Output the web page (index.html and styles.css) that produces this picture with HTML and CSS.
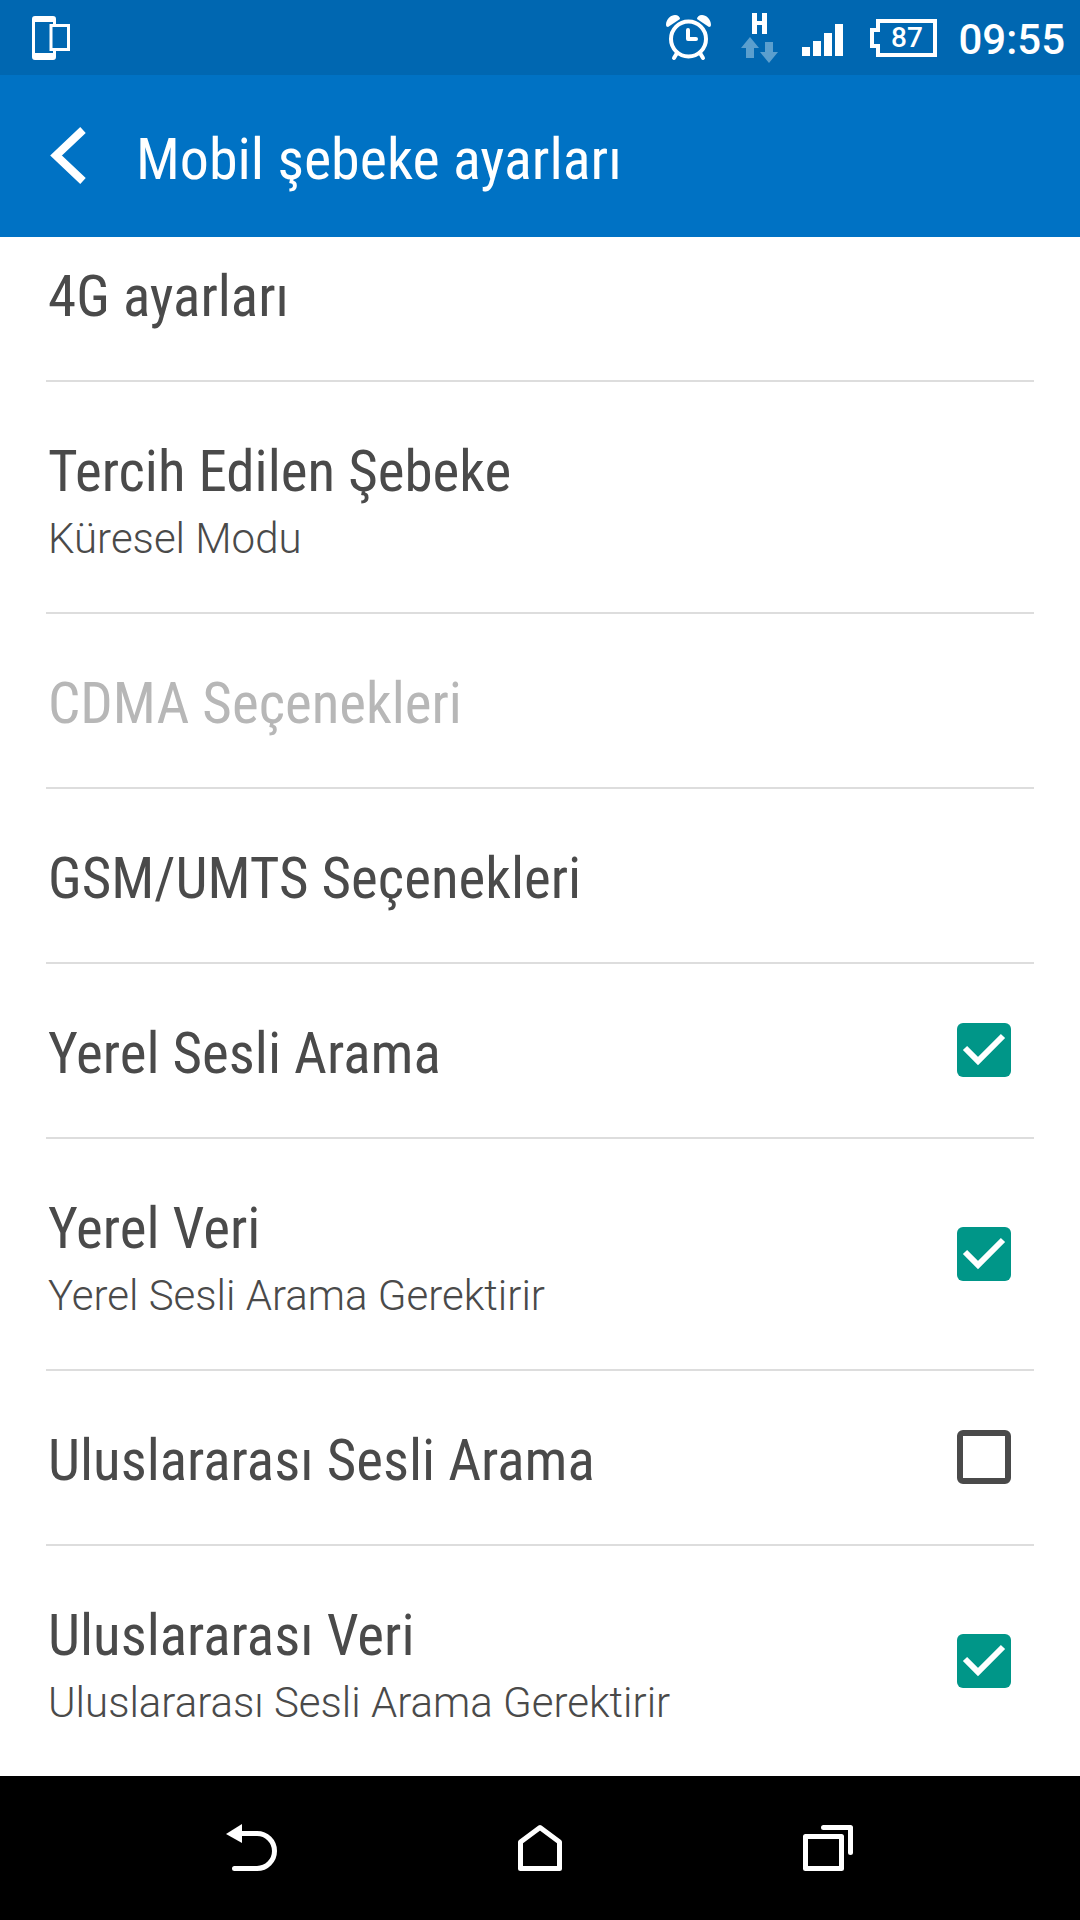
FILE: index.html
```html
<!DOCTYPE html>
<html lang="tr">
<head>
<meta charset="utf-8">
<meta name="viewport" content="width=device-width, initial-scale=1">
<title>Mobil şebeke ayarları</title>
<link rel="stylesheet" href="styles.css">
</head>
<body>
<div class="screen">
  <div class="status">
    <svg class="status-device" width="40" height="44" viewBox="0 0 40 44" aria-hidden="true">
      <path fill="#fff" fill-rule="evenodd" d="M3 0H21Q24 0 24 3V8H21V6H3V37H21V35H24V41Q24 44 21 44H3Q0 44 0 41V3Q0 0 3 0Z"/>
      <path fill="none" stroke="#fff" stroke-width="3" d="M19 9.5H36.500V33.500H19Z"/>
    </svg>
    <div class="status-icons">
      <svg class="status-alarm" width="46" height="46" viewBox="0 0 46 46" aria-hidden="true">
        <path fill="#fff" d="M0 10C0 4 5 0 9 0C12 0 14 2 14 4L2 12Q0 12 0 10ZM45 10C45 4 40 0 36 0C33 0 31 2 31 4L43 12Q45 12 45 10Z"/>
        <circle cx="22.500" cy="24" r="17.500" fill="none" stroke="#fff" stroke-width="4"/>
        <path fill="none" stroke="#fff" stroke-width="4" stroke-linecap="round" stroke-linejoin="round" d="M22 15V24H30M11 38L8 43M34 38L37 43"/>
      </svg>
      <svg class="status-data" width="38" height="50" viewBox="0 0 38 50" aria-hidden="true">
        <path fill="#fff" d="M11 0H16V8H21V0H26V21H21V12H16V21H11Z"/>
        <path fill="#5b9fce" d="M9 24L18 35H13V45H5V35H0ZM24 29H32V39H37L28 50L19 39H24Z"/>
      </svg>
      <svg class="status-signal" width="41" height="32" viewBox="0 0 41 32" aria-hidden="true">
        <path fill="#fff" d="M0 23H8V32H0ZM11 17H19V32H11ZM22 9H30V32H22ZM33 0H41V32H33Z"/>
      </svg>
      <span class="battery">
        <svg width="67" height="38" viewBox="0 0 67 38" aria-hidden="true">
          <path fill="none" stroke="#fff" stroke-width="4" d="M8 2H65V36H8V27H2V11H8Z"/>
        </svg>
        <span class="battery-level">87</span>
      </span>
      <time class="clock">09:55</time>
    </div>
  </div>

  <header class="header">
    <button class="up" type="button" aria-label="Geri">
      <svg width="36" height="57" viewBox="0 0 36 57" aria-hidden="true">
        <path fill="none" stroke="#fff" stroke-width="8" d="M33 3L6 28.500L33 54"/>
      </svg>
    </button>
    <h1 class="heading">Mobil şebeke ayarları</h1>
  </header>

  <main class="settings">
    <button class="row row-first" type="button"><span class="title">4G ayarları</span></button>
    <button class="row" type="button">
      <span class="text"><span class="title">Tercih Edilen Şebeke</span><span class="summary">Küresel Modu</span></span>
    </button>
    <button class="row" type="button" disabled><span class="title">CDMA Seçenekleri</span></button>
    <button class="row" type="button"><span class="title">GSM/UMTS Seçenekleri</span></button>
    <label class="row">
      <span class="title">Yerel Sesli Arama</span>
      <input class="check" type="checkbox" checked>
    </label>
    <label class="row">
      <span class="text"><span class="title">Yerel Veri</span><span class="summary">Yerel Sesli Arama Gerektirir</span></span>
      <input class="check" type="checkbox" checked>
    </label>
    <label class="row">
      <span class="title">Uluslararası Sesli Arama</span>
      <input class="check" type="checkbox">
    </label>
    <label class="row">
      <span class="text"><span class="title">Uluslararası Veri</span><span class="summary">Uluslararası Sesli Arama Gerektirir</span></span>
      <input class="check" type="checkbox" checked>
    </label>
  </main>

  <nav class="navbar">
    <button class="nav-button" type="button" aria-label="Geri">
      <svg width="52" height="48" viewBox="0 0 52 48" aria-hidden="true">
        <path fill="#fff" d="M0 10L16 0V19Z"/>
        <path fill="none" stroke="#fff" stroke-width="5" stroke-linecap="round" d="M14 9.500H31A17.500 17.500 0 0 1 31 44.500H8.500"/>
      </svg>
    </button>
    <button class="nav-button" type="button" aria-label="Ana ekran">
      <svg width="44" height="48" viewBox="0 0 44 48" aria-hidden="true">
        <path fill="none" stroke="#fff" stroke-width="5" stroke-linejoin="round" d="M2.500 18L22 3.500L41.500 18V44.500H2.500Z"/>
      </svg>
    </button>
    <button class="nav-button" type="button" aria-label="Son uygulamalar">
      <svg width="50" height="48" viewBox="0 0 50 48" aria-hidden="true">
        <path fill="none" stroke="#fff" stroke-width="5" stroke-linecap="round" stroke-linejoin="round" d="M2.500 12.500H38.500V44.500H2.500ZM20.500 3.500H47.500V28.500"/>
      </svg>
    </button>
  </nav>
</div>
</body>
</html>
```
FILE: styles.css
```css
* {
  box-sizing: border-box;
}

body {
  margin: 0;
  font-family: Roboto, "Noto Sans", sans-serif;
  color: #4a4a4a;
  background: #fff;
}

button {
  margin: 0;
  padding: 0;
  border: 0;
  background: none;
  font: inherit;
  color: inherit;
  text-align: left;
}

svg {
  display: block;
  flex: none;
}

.screen {
  display: flex;
  flex-direction: column;
  min-height: 100vh;
}

.status {
  display: flex;
  justify-content: space-between;
  height: 75px;
  padding: 0 15px 0 32px;
  background: #0067b1;
  color: #fff;
}

.status-device {
  margin-top: 16px;
}

.status-icons {
  display: flex;
  align-items: flex-start;
}

.status-alarm {
  margin-top: 15px;
}

.status-data {
  margin: 13px 0 0 29px;
}

.status-signal {
  margin: 24px 0 0 23px;
}

.battery {
  position: relative;
  margin: 19px 0 0 27px;
}

.battery-level {
  position: absolute;
  inset: 0 0 0 6px;
  font-size: 28px;
  font-weight: 500;
  line-height: 38px;
  text-align: center;
}

.clock {
  margin: 15px 0 0 21px;
  font-size: 42px;
  font-weight: 500;
  line-height: 49px;
}

.header {
  display: flex;
  align-items: center;
  height: 162px;
  padding: 5px 0 0 50px;
  background: #0072c4;
  color: #fff;
}

.up {
  margin-bottom: 6px;
}

.heading {
  margin: 0 0 0 50px;
  font: 400 58px/68px "Roboto Condensed", Roboto, sans-serif;
}

.settings {
  flex: 1;
  display: flex;
  flex-direction: column;
  padding: 0 46px;
}

.row {
  display: flex;
  align-items: center;
  justify-content: space-between;
  padding: 56px 23px 49px 2px;
  border-bottom: 2px solid #ddd;
}

.row-first {
  padding-top: 26px;
}

.row:last-child {
  border-bottom: 0;
}

.row:disabled {
  color: #b7b7b7;
}

.text {
  display: flex;
  flex-direction: column;
  gap: 8px;
}

.title {
  font: 400 57px/68px "Roboto Condensed", Roboto, sans-serif;
}

.summary {
  font-size: 42px;
  font-weight: 300;
  line-height: 49px;
}

.check {
  appearance: none;
  flex: none;
  width: 54px;
  height: 54px;
  margin: -8px 0 0;
  border: 6px solid #4a4a4a;
  border-radius: 6px;
}

.check:checked {
  border: 0;
  background: #009688 url("data:image/svg+xml,%3Csvg xmlns='http://www.w3.org/2000/svg' viewBox='0 0 54 54'%3E%3Cpath d='M8 25L21 38L46 13' fill='none' stroke='%23fff' stroke-width='6'/%3E%3C/svg%3E");
}

.navbar {
  display: flex;
  height: 144px;
  padding: 0 10%;
  background: #000;
}

.nav-button {
  flex: 1;
  display: flex;
  align-items: center;
  justify-content: center;
}
```
